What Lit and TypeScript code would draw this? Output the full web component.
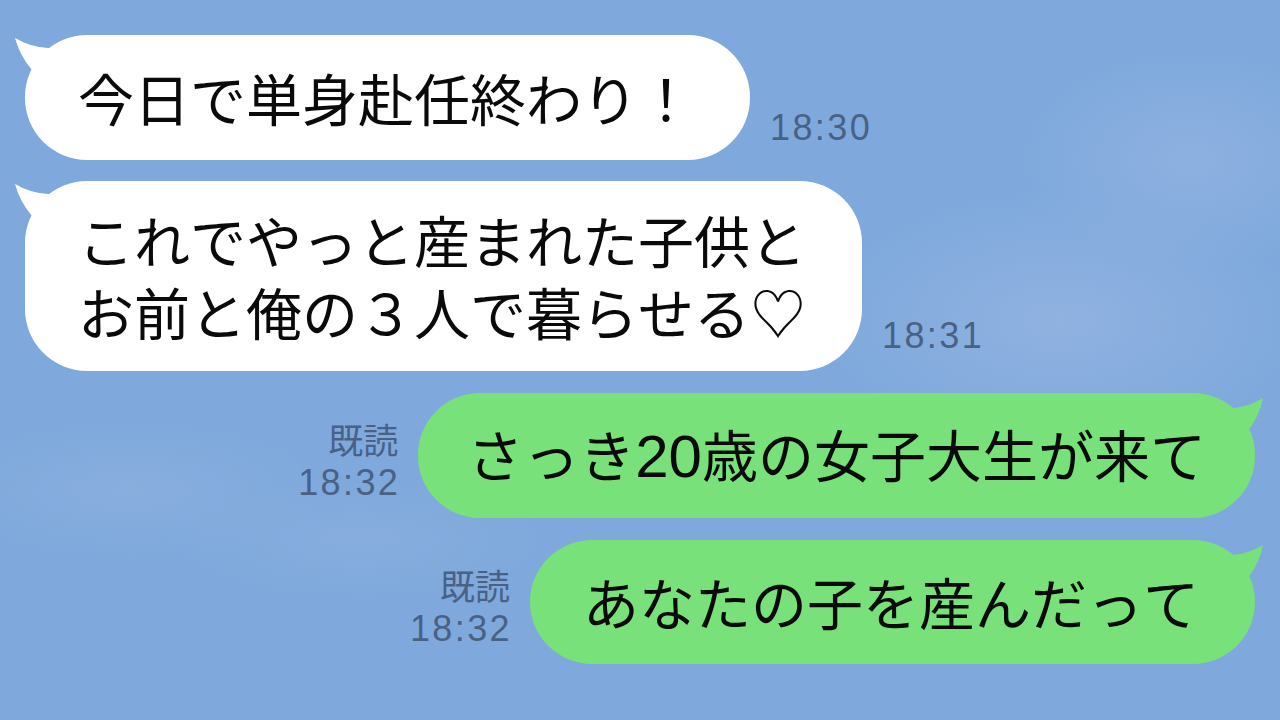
import { LitElement, css, html, svg } from "lit";
import { customElement } from "lit/decorators.js";

interface Message {
  lines: unknown[];
  time: string;
  mine?: boolean;
  tight?: boolean;
}

const messages: Message[] = [
  { lines: ["今日で単身赴任終わり！"], time: "18:30" },
  { lines: ["これでやっと産まれた子供と", "お前と俺の３人で暮らせる♡"], time: "18:31" },
  {
    lines: [html`さっき<span class="num">20</span>歳の女子大生が来て`],
    time: "18:32",
    mine: true,
    tight: true,
  },
  { lines: ["あなたの子を産んだって"], time: "18:32", mine: true },
];

const tailIn = svg`<path d="M0 0 Q15 9 33 10 L46 12 L46 44 L17 32 Q5 18 0 0 Z" />`;
const tailOut = svg`<path d="M46 0 Q31 9 16 10 L2 20 L2 44 L33 30 Q42 18 46 0 Z" />`;

@customElement("app-root")
export class AppRoot extends LitElement {
  static styles = css`
    :host {
      display: block;
      width: 1280px;
      height: 720px;
      overflow: hidden;
      font-family: "Noto Sans CJK JP", "Noto Sans", sans-serif;
      background:
        radial-gradient(ellipse 200px 70px at 130px 490px, rgba(146, 180, 224, 0.45), transparent),
        radial-gradient(ellipse 190px 60px at 360px 540px, rgba(146, 180, 224, 0.4), transparent),
        radial-gradient(ellipse 170px 110px at 1190px 160px, rgba(148, 180, 226, 0.7), transparent),
        radial-gradient(ellipse 240px 130px at 1060px 320px, rgba(148, 180, 226, 0.8), transparent),
        #7fa9dc;
    }
    .chat {
      display: flex;
      flex-direction: column;
      gap: 21px;
      padding: 35px 25px 0;
    }
    .row {
      display: flex;
      align-items: flex-end;
    }
    .row.mine {
      justify-content: flex-end;
      margin-top: 1px;
    }
    .bubble {
      position: relative;
      box-sizing: border-box;
      min-height: 125px;
      display: flex;
      align-items: center;
      padding: 22px 56px 24px 53px;
      border-radius: 62px;
      background: #fff;
      color: #0a0a0a;
      font-size: 56px;
      font-kerning: none;
      line-height: 72px;
      white-space: nowrap;
    }
    .row:last-child .bubble {
      min-height: 124px;
    }
    .bubble.tight {
      padding-left: 49px;
      padding-right: 49px;
    }
    .mine .bubble {
      background: #79e179;
    }
    .num {
      font-family: "Liberation Sans", sans-serif;
      font-size: 60px;
    }
    .tail {
      position: absolute;
      top: 3px;
      left: -10px;
      width: 46px;
      height: 44px;
      fill: #fff;
    }
    .mine .tail {
      top: 5px;
      left: auto;
      right: -8px;
      fill: #79e179;
    }
    .meta {
      color: #4a6186;
      font-family: "Liberation Sans", "Noto Sans CJK JP", sans-serif;
      font-size: 36px;
      line-height: 44px;
      letter-spacing: 2.4px;
      margin: 0 0 10px 20px;
    }
    .row:nth-child(2) .meta {
      margin-bottom: 13px;
    }
    .mine .meta {
      margin: 0 18px 13px 0;
      text-align: right;
    }
    .read {
      font-family: "Noto Sans CJK JP", sans-serif;
      font-size: 35px;
      letter-spacing: 0;
      margin-right: 2px;
    }
  `;

  render() {
    return html`
      <div class="chat">
        ${messages.map((m) => {
          const bubble = html`
            <div class="bubble ${m.tight ? "tight" : ""}">
              <svg class="tail" viewBox="0 0 46 44">${m.mine ? tailOut : tailIn}</svg>
              <div>${m.lines.map((l) => html`<div>${l}</div>`)}</div>
            </div>
          `;
          const meta = html`
            <div class="meta">
              ${m.mine ? html`<div class="read">既読</div>` : null}
              <div>${m.time}</div>
            </div>
          `;
          return m.mine
            ? html`<div class="row mine">${meta}${bubble}</div>`
            : html`<div class="row">${bubble}${meta}</div>`;
        })}
      </div>
    `;
  }
}
